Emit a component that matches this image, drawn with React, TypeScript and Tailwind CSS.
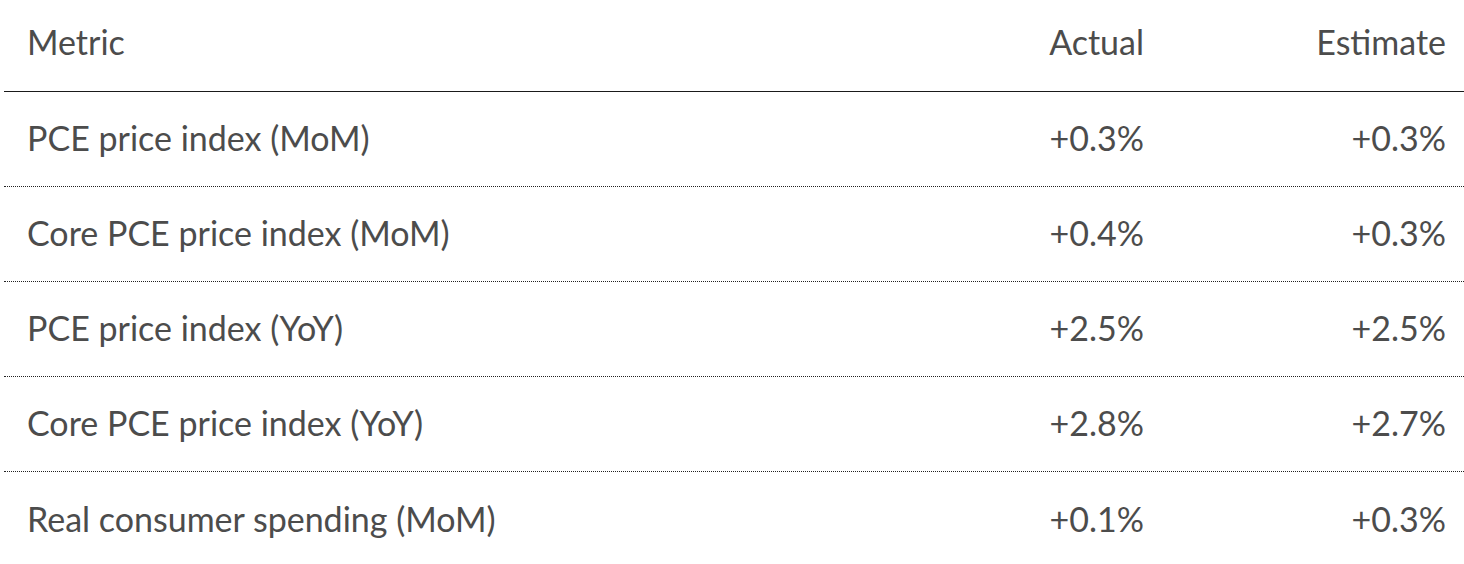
const rows = [
  { metric: 'PCE price index (MoM)', actual: '+0.3%', estimate: '+0.3%' },
  { metric: 'Core PCE price index (MoM)', actual: '+0.4%', estimate: '+0.3%' },
  { metric: 'PCE price index (YoY)', actual: '+2.5%', estimate: '+2.5%' },
  { metric: 'Core PCE price index (YoY)', actual: '+2.8%', estimate: '+2.7%' },
  { metric: 'Real consumer spending (MoM)', actual: '+0.1%', estimate: '+0.3%' },
];

export default function App() {
  return (
    <div className="min-h-screen bg-white pl-[4px] text-[#4c4c4c] font-['Lato','Noto_Sans',sans-serif] text-[34px] leading-none">
      <div className="grid h-[92px] grid-cols-[1fr_300px_302px] items-center border-b border-[#1a1a1a] pb-[8px]">
        <div className="pl-[23px]">Metric</div>
        <div className="pr-[18px] text-right">Actual</div>
        <div className="pr-[18px] text-right">Estimate</div>
      </div>
      {rows.map((r, i) => (
        <div
          key={r.metric}
          className={`grid h-[95px] grid-cols-[1fr_300px_302px] items-center pb-[2px] ${i < rows.length - 1 ? 'border-b border-dotted border-[#222]' : ''}`}
        >
          <div className="pl-[23px]">{r.metric}</div>
          <div className="pr-[18px] text-right">{r.actual}</div>
          <div className="pr-[18px] text-right">{r.estimate}</div>
        </div>
      ))}
    </div>
  );
}
